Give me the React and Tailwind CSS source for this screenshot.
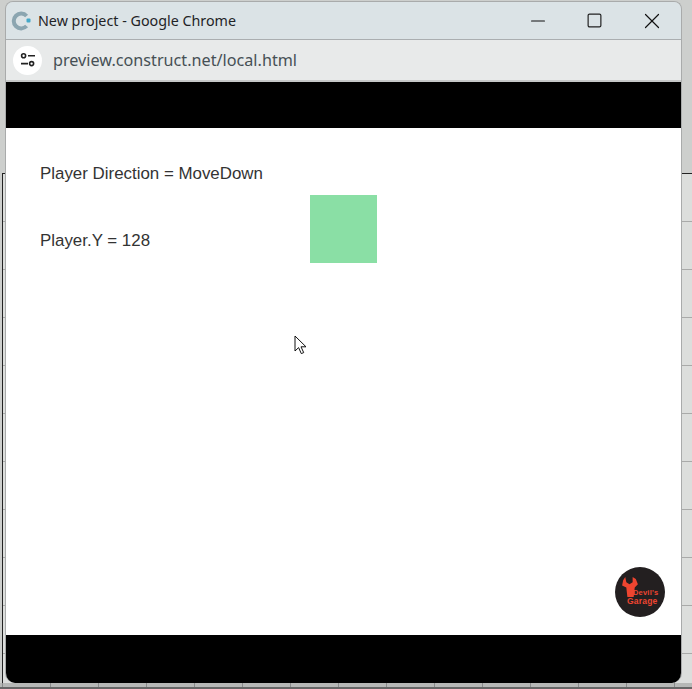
import React from 'react';
import { Minus, Square, X } from 'lucide-react';

const ChromeLogo = () => (
  <svg width="20" height="20" viewBox="0 0 20 20" fill="none">
    <path d="M15.6 5A7.4 7.4 0 1 0 15.6 15" stroke="#8ba5b0" strokeWidth="4" />
    <rect x="15.5" y="7.5" width="4" height="4" rx="1" fill="#45a8c8" />
  </svg>
);

const SiteIcon = () => (
  <svg width="16" height="16" viewBox="0 0 16 16" fill="none" stroke="#222" strokeWidth="1.6">
    <circle cx="3.6" cy="3.8" r="2" />
    <path d="M8 3.8h7M1 11.6h7" />
    <circle cx="11.6" cy="11.6" r="2" />
  </svg>
);

const Cursor = () => (
  <svg width="13" height="20" viewBox="0 0 13 20" fill="#fff" stroke="#111" strokeWidth="1">
    <path d="M1 1v15l3.6-3.4 2.7 6 2.4-1-2.7-5.8h5z" />
  </svg>
);

const Logo = () => (
  <div className="absolute left-[609px] top-[439px] w-[50px] h-[50px] rounded-full bg-[#231f20] overflow-hidden">
    <svg className="absolute left-[7px] top-[10px]" width="16" height="20" viewBox="0 0 15 19" fill="#ee4530">
      <path d="M3 0l1 5 3 2 3-2V0l3 2 2 5-3 3-1 9H5L4 10 0 8l1-5z" />
    </svg>
    <div className="absolute left-[12px] top-[22px] text-[7.5px] leading-[8px] font-bold tracking-[0.2px] text-[#ee4530] whitespace-nowrap">
      <div className="pl-[6px]">Devil's</div>
      <div className="text-[8.5px]">Garage</div>
    </div>
  </div>
);

export default function App() {
  return (
    <div className="relative w-[692px] h-[689px] overflow-hidden bg-[#cdcfcd] font-['Liberation_Sans',Arial,sans-serif]">
      {/* editor grid behind the window */}
      <div className="absolute left-[2px] right-0 top-[173px] bottom-0 border-l border-t border-[#222] bg-[#dcdedc] bg-[linear-gradient(#a9aaa9_1px,transparent_1px),linear-gradient(90deg,#9a9c9c_1px,transparent_1px)] bg-[size:48px_48px] bg-[position:0_47px,47px_0]" />
      <div className="absolute left-0 right-0 bottom-0 h-[6px] bg-[#b6b8b6] border-b-2 border-[#666] bg-[linear-gradient(90deg,#8a8c8c_1px,transparent_1px)] bg-[size:48px_100%] bg-[position:2px_0]" />

      <div className="relative ml-[5px] mt-px w-[677px] h-[682px] rounded-t-[8px] rounded-b-[10px] overflow-hidden flex flex-col border-x border-[#a9abab] border-t">
        <div className="h-[38px] bg-[#dbe3e6] border-b border-[#aaaeb0] flex items-center pl-[5px] shrink-0">
          <ChromeLogo />
          <span className="ml-[7px] text-[14.3px] text-[#1f2326] font-['Noto_Sans',sans-serif]">New project - Google Chrome</span>
          <div className="ml-auto flex items-center">
            <div className="w-[57px] flex justify-center pr-[2px]">
              <Minus size={22} strokeWidth={1.2} absoluteStrokeWidth color="#111" />
            </div>
            <div className="w-[57px] flex justify-center pr-[2px]">
              <Square size={17} strokeWidth={1.2} absoluteStrokeWidth color="#222" />
            </div>
            <div className="w-[57px] flex justify-center pr-[2px]">
              <X size={26} strokeWidth={1.2} absoluteStrokeWidth color="#111" />
            </div>
          </div>
        </div>
        <div className="h-[42px] bg-[#e8eaea] border-b-2 border-[#c6c8c8] flex items-center pl-[7px] shrink-0">
          <div className="w-[29px] h-[29px] rounded-full bg-white flex items-center justify-center">
            <SiteIcon />
          </div>
          <span className="ml-[11px] text-[16.2px] text-[#465055] font-['Noto_Sans',sans-serif]">preview.construct.net/local.html</span>
        </div>
        <div className="h-[46px] bg-black shrink-0" />
        <div className="relative flex-1 bg-white">
          <div className="pl-[34px] pt-[35px] flex flex-col gap-[46px] text-[16.9px] leading-[21px] text-[#333]">
            <span>Player Direction = MoveDown</span>
            <span>Player.Y = 128</span>
          </div>
          <div className="absolute left-[304px] top-[67px] w-[67px] h-[68px] bg-[#8adfa5]" />
          <div className="absolute left-[288px] top-[207px]">
            <Cursor />
          </div>
          <Logo />
        </div>
        <div className="h-[48px] bg-black shrink-0" />
      </div>
    </div>
  );
}
